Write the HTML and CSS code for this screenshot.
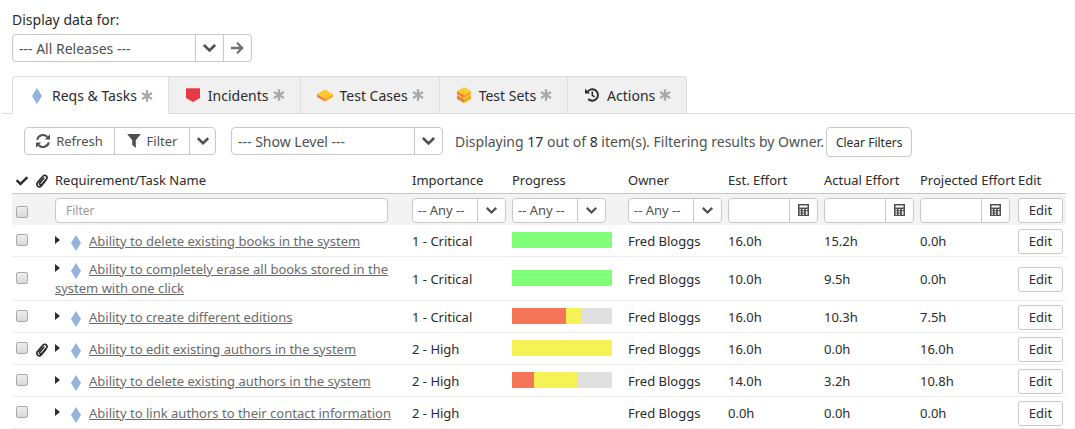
FILE: index.html
```html
<!DOCTYPE html>
<html lang="en">
<head>
<meta charset="utf-8">
<title>My Work</title>
<link rel="stylesheet" href="styles.css">
</head>
<body>
<svg class="sprite" aria-hidden="true">
  <symbol id="chevron" viewBox="0 0 12 8"><path d="M.8 1.200 6 6.200l5.200-5" fill="none" stroke="currentColor" stroke-width="2.500"/></symbol>
  <symbol id="arrow" viewBox="0 0 13 12"><path d="M0 6h11M6 .8 11.200 6 6 11.200" fill="none" stroke="currentColor" stroke-width="2.300"/></symbol>
  <symbol id="asterisk" viewBox="0 0 12 12"><path d="M6 .2v11.600M1 3.100l10 5.800M1 8.900l10-5.800" stroke="currentColor" stroke-width="2.300"/></symbol>
  <symbol id="diamond" viewBox="0 0 10 16"><path d="M5 0l5 8-5 8-5-8z" fill="#93b2dc"/></symbol>
  <symbol id="incident" viewBox="0 0 16 16"><path d="M1 1h14v10l-7 4-7-4z" fill="#e63946"/><path d="M1 1h14v1H1z" fill="#f16a76"/></symbol>
  <symbol id="testcase" viewBox="0 0 16 13"><path d="M0 5.500 8 10v3L0 8.500z" fill="#f0813a"/><path d="M16 5.500 8 10v3l8-4.500z" fill="#f7a727"/><path d="M8 1l8 4.500L8 10 0 5.500z" fill="#fdc92c"/></symbol>
  <symbol id="testset" viewBox="0 0 14 16"><path d="M0 8l7 4v4l-7-4z" fill="#f0813a"/><path d="M14 8l-7 4v4l7-4z" fill="#f7a727"/><path d="M0 8l7-3 7 3-7 4z" fill="#fdc92c"/><path d="M0 4l7 4v3L0 7z" fill="#f0813a"/><path d="M14 4 7 8v3l7-4z" fill="#f7a727"/><path d="M7 0l7 4-7 4-7-4z" fill="#fdc92c"/></symbol>
  <symbol id="history" viewBox="-1 -1 16 16"><path d="M2.300 4.200A5.700 5.700 0 1 1 3.200 11" fill="none" stroke="currentColor" stroke-width="1.900"/><path d="M0 .8 5 5.600H0z" fill="currentColor"/><path d="M7.300 3.600V7.400l2.400 1.500" fill="none" stroke="currentColor" stroke-width="1.500"/></symbol>
  <symbol id="refresh" viewBox="0 0 14 14"><path d="M1.200 5.800A5.900 5.900 0 0 1 11.400 3M12.800 8.200A5.900 5.900 0 0 1 2.600 11" fill="none" stroke="currentColor" stroke-width="2"/><path d="M14 .3v5.200H8.800zM0 13.700V8.500h5.200z" fill="currentColor"/></symbol>
  <symbol id="funnel" viewBox="0 0 14 14"><path d="M.2 0h13.600L8.800 6.200V14L5.200 11V6.200z" fill="currentColor"/></symbol>
  <symbol id="check" viewBox="0 0 512 512"><path d="M173.900 439.400 7.500 273c-10-10-10-26.200 0-36.200l36.200-36.200c10-10 26.200-10 36.200 0L192 312.700 432.100 72.600c10-10 26.200-10 36.200 0l36.200 36.200c10 10 10 26.200 0 36.200L210.100 439.400c-10 10-26.200 10-36.200 0z" fill="currentColor"/></symbol>
  <symbol id="clip" viewBox="0 0 12 14"><path d="M9.800 6.400 5.400 11.600C4.400 12.800 2.800 13 1.700 12.100S.6 9.700 1.500 8.600L6.800 2.300C7.700 1.200 9.200.9 10.200 1.800s1 2.300.2 3.300L6 10.300c-.6.700-1.400.8-2 .3s-.6-1.300 0-2L7.700 4.200" fill="none" stroke="currentColor" stroke-width="1.700" stroke-linecap="round"/></symbol>
  <symbol id="calc" viewBox="0 0 11 12"><path d="M0 0h11v12H0zM1.500 1.500v2h8v-2zM1.500 5v1.300H3V5zM4.600 5v1.300h1.600V5zM8 5v1.300h1.500V5zM1.500 7.300v1.300H3V7.300zM4.600 7.300v1.300h1.600V7.300zM8 7.300v3.500h1.500V7.300zM1.500 9.600v1.200H3V9.600zM4.600 9.600v1.200h1.600V9.600z" fill="currentColor" fill-rule="evenodd"/></symbol>
  <symbol id="caret" viewBox="0 0 5 8"><path d="M0 0l5 4-5 4z" fill="currentColor"/></symbol>
</svg>

<header class="release">
  <label for="release">Display data for:</label>
  <div class="group release-group">
    <span class="picker"><select id="release"><option>--- All Releases ---</option></select><svg class="chevron"><use href="#chevron"/></svg></span>
    <button class="go" type="button" aria-label="Go"><svg class="i-arrow"><use href="#arrow"/></svg></button>
  </div>
</header>

<nav class="tabs">
  <a class="tab active" href="#reqs"><svg class="i-tab"><use href="#diamond"/></svg><span>Reqs &amp; Tasks</span><svg class="star"><use href="#asterisk"/></svg></a>
  <a class="tab" href="#incidents"><svg class="i-tab"><use href="#incident"/></svg><span>Incidents</span><svg class="star"><use href="#asterisk"/></svg></a>
  <a class="tab" href="#cases"><svg class="i-tab"><use href="#testcase"/></svg><span>Test Cases</span><svg class="star"><use href="#asterisk"/></svg></a>
  <a class="tab" href="#sets"><svg class="i-tab"><use href="#testset"/></svg><span>Test Sets</span><svg class="star"><use href="#asterisk"/></svg></a>
  <a class="tab" href="#actions"><svg class="i-tab"><use href="#history"/></svg><span>Actions</span><svg class="star"><use href="#asterisk"/></svg></a>
</nav>

<main>
  <div class="toolbar">
    <div class="group">
      <button class="refresh" type="button"><svg class="i-14"><use href="#refresh"/></svg>Refresh</button>
      <button class="filter" type="button"><svg class="i-14"><use href="#funnel"/></svg>Filter</button>
      <button class="more" type="button" aria-label="Filter options"><svg class="i-chevron"><use href="#chevron"/></svg></button>
    </div>
    <div class="group level-group"><span class="picker"><select aria-label="Show level"><option>--- Show Level ---</option></select><svg class="chevron"><use href="#chevron"/></svg></span></div>
    <p class="status">Displaying <b>17</b> out of <b>8</b> item(s). Filtering results by Owner.</p>
    <button class="clear" type="button">Clear Filters</button>
  </div>

  <table class="grid">
    <colgroup><col class="c-check"><col class="c-clip"><col><col class="c-imp"><col class="c-prog"><col class="c-owner"><col class="c-num"><col class="c-num"><col class="c-proj"><col class="c-edit"></colgroup>
    <thead>
      <tr><th><svg class="i-check"><use href="#check"/></svg></th><th><svg class="i-clip"><use href="#clip"/></svg></th><th>Requirement/Task Name</th><th>Importance</th><th>Progress</th><th>Owner</th><th>Est. Effort</th><th>Actual Effort</th><th>Projected Effort</th><th>Edit</th></tr>
      <tr class="filters">
        <td><input type="checkbox" aria-label="Select all"></td><td></td>
        <td><input class="name-filter" type="text" placeholder="Filter" aria-label="Filter by name"></td>
        <td><span class="picker small"><select aria-label="Importance"><option>-- Any --</option></select><svg class="chevron"><use href="#chevron"/></svg></span></td>
        <td><span class="picker small"><select aria-label="Progress"><option>-- Any --</option></select><svg class="chevron"><use href="#chevron"/></svg></span></td>
        <td><span class="picker small"><select aria-label="Owner"><option>-- Any --</option></select><svg class="chevron"><use href="#chevron"/></svg></span></td>
        <td><span class="range"><input type="text" aria-label="Est. effort"><button type="button" aria-label="Pick est. effort"><svg class="i-calc"><use href="#calc"/></svg></button></span></td>
        <td><span class="range"><input type="text" aria-label="Actual effort"><button type="button" aria-label="Pick actual effort"><svg class="i-calc"><use href="#calc"/></svg></button></span></td>
        <td><span class="range"><input type="text" aria-label="Projected effort"><button type="button" aria-label="Pick projected effort"><svg class="i-calc"><use href="#calc"/></svg></button></span></td>
        <td><button class="edit" type="button">Edit</button></td>
      </tr>
    </thead>
    <tbody>
      <tr><td><input type="checkbox" aria-label="Select row"></td><td></td><td><svg class="i-caret"><use href="#caret"/></svg><svg class="i-req"><use href="#diamond"/></svg><a href="#r1">Ability to delete existing books in the system</a></td><td>1 - Critical</td><td><div class="bar"><i class="green" style="width:100%"></i></div></td><td>Fred Bloggs</td><td>16.0h</td><td>15.2h</td><td>0.0h</td><td><button class="edit" type="button">Edit</button></td></tr>
      <tr><td><input type="checkbox" aria-label="Select row"></td><td></td><td><svg class="i-caret"><use href="#caret"/></svg><svg class="i-req"><use href="#diamond"/></svg><a href="#r2">Ability to completely erase all books stored in the system with one click</a></td><td>1 - Critical</td><td><div class="bar"><i class="green" style="width:100%"></i></div></td><td>Fred Bloggs</td><td>10.0h</td><td>9.5h</td><td>0.0h</td><td><button class="edit" type="button">Edit</button></td></tr>
      <tr><td><input type="checkbox" aria-label="Select row"></td><td></td><td><svg class="i-caret"><use href="#caret"/></svg><svg class="i-req"><use href="#diamond"/></svg><a href="#r3">Ability to create different editions</a></td><td>1 - Critical</td><td><div class="bar"><i class="red" style="width:54%"></i><i class="yellow" style="width:16%"></i></div></td><td>Fred Bloggs</td><td>16.0h</td><td>10.3h</td><td>7.5h</td><td><button class="edit" type="button">Edit</button></td></tr>
      <tr><td><input type="checkbox" aria-label="Select row"></td><td><svg class="i-clip"><use href="#clip"/></svg></td><td><svg class="i-caret"><use href="#caret"/></svg><svg class="i-req"><use href="#diamond"/></svg><a href="#r4">Ability to edit existing authors in the system</a></td><td>2 - High</td><td><div class="bar"><i class="yellow" style="width:100%"></i></div></td><td>Fred Bloggs</td><td>16.0h</td><td>0.0h</td><td>16.0h</td><td><button class="edit" type="button">Edit</button></td></tr>
      <tr><td><input type="checkbox" aria-label="Select row"></td><td></td><td><svg class="i-caret"><use href="#caret"/></svg><svg class="i-req"><use href="#diamond"/></svg><a href="#r5">Ability to delete existing authors in the system</a></td><td>2 - High</td><td><div class="bar"><i class="red" style="width:22%"></i><i class="yellow" style="width:43%"></i></div></td><td>Fred Bloggs</td><td>14.0h</td><td>3.2h</td><td>10.8h</td><td><button class="edit" type="button">Edit</button></td></tr>
      <tr><td><input type="checkbox" aria-label="Select row"></td><td></td><td><svg class="i-caret"><use href="#caret"/></svg><svg class="i-req"><use href="#diamond"/></svg><a href="#r6">Ability to link authors to their contact information</a></td><td>2 - High</td><td></td><td>Fred Bloggs</td><td>0.0h</td><td>0.0h</td><td>0.0h</td><td><button class="edit" type="button">Edit</button></td></tr>
    </tbody>
  </table>
</main>
</body>
</html>
```

FILE: styles.css
```css
* { box-sizing: border-box; }
body {
  margin: 0;
  background: #fff;
  color: #2b2b2b;
  font: 13px/19px "Noto Sans", sans-serif;
}
.sprite { display: none; }
svg { flex: none; }
button, input, select {
  margin: 0;
  font: inherit;
  color: #505050;
  background: #fff;
  border: 1px solid #c8c8c8;
  border-radius: 4px;
}
button { padding: 0; display: flex; align-items: center; justify-content: center; }

.release { padding: 10px 12px 14px; font-size: 14px; }
.release label { display: block; margin-bottom: 5px; }
.group { display: flex; height: 28px; }
.group > * { border-radius: 0; }
.group > * + * { margin-left: -1px; }
.group > :first-child { border-radius: 4px 0 0 4px; }
.group > :last-child { border-radius: 0 4px 4px 0; }
.group > :only-child { border-radius: 4px; }

.picker {
  display: grid;
  grid-template-columns: 1fr 28px;
  width: 212px;
  height: 28px;
  background: #fff;
  border: 1px solid #c8c8c8;
  overflow: hidden;
}
.picker select {
  grid-area: 1 / 1 / 2 / 3;
  width: 100%;
  height: 100%;
  padding: 0 34px 0 6px;
  border: 0;
  background: transparent;
  appearance: none;
}
.picker .chevron {
  grid-area: 1 / 2;
  width: 28px;
  height: 100%;
  padding: 0 7px;
  border-left: 1px solid #c8c8c8;
  color: #505050;
  pointer-events: none;
}
.picker.small { width: 94px; height: 25px; border-radius: 4px; }
.picker.small select { padding: 0 28px 0 5px; }
.picker.small .chevron { padding: 0 8px; }
.go { width: 29px; }
.i-arrow { width: 13px; height: 12px; color: #707070; }

.tabs {
  display: flex;
  margin-left: 2px;
  padding-left: 10px;
  border-bottom: 1px solid #ddd;
  font-size: 14px;
}
.tab {
  display: flex;
  align-items: center;
  height: 37px;
  padding: 0 15px 0 16px;
  background: #f0f0f0;
  border: 1px solid #ddd;
  border-left-width: 0;
  border-bottom: 0;
  color: #2b2b2b;
  text-decoration: none;
}
.tab.active { height: 38px; margin-bottom: -1px; background: #fff; border-left-width: 1px; border-top-left-radius: 4px; }
.tab:last-child { border-top-right-radius: 4px; }
.i-tab { width: 16px; height: 16px; margin-right: 7px; }
.star { width: 12px; height: 12px; margin-left: 4px; color: #aaa; }

.toolbar { display: flex; align-items: flex-start; padding: 13px 24px 12px; }
.refresh { width: 91px; }
.filter { width: 76px; }
.more { width: 27px; }
.i-14 { width: 14px; height: 14px; margin-right: 6px; }
.i-chevron { width: 12px; height: 8px; }
.level-group { margin: 0 12px 0 15px; font-size: 14px; }
.status { margin: 5px 2px 0 0; color: #505050; font-size: 14px; }
.status b { font-weight: 400; color: #2b2b2b; }
.clear { height: 30px; padding: 0 9px; font-size: 12px; color: #2b2b2b; }

.grid { width: calc(100% - 21px); margin-left: 12px; table-layout: fixed; border-spacing: 0; }
.c-check { width: 20px; }
.c-clip { width: 19px; }
.c-imp, .c-owner { width: 100px; }
.c-prog { width: 116px; }
.c-num { width: 96px; }
.c-proj { width: 98px; }
.c-edit { width: 52px; }
.grid th { height: 25px; padding: 0 0 2px 4px; border-bottom: 1px solid #fdc92c; font-weight: 400; text-align: left; white-space: nowrap; }
.grid td { height: 32px; padding: 3px 4px 2px; border-bottom: 1px solid #eee; }
.grid .filters td { height: 31px; background: #f3f3f3; border-bottom: 0; }
.grid a { color: #6b6b6b; }
.grid svg { display: inline-block; }
.i-check { width: 12px; height: 12px; vertical-align: middle; }
.i-clip { width: 12px; height: 14px; vertical-align: middle; }
.i-caret { width: 5px; height: 8px; margin-right: 11px; vertical-align: 2px; }
.i-req { width: 10px; height: 16px; margin-right: 8px; vertical-align: -5px; }
.i-calc { width: 11px; height: 12px; }

input[type="checkbox"] {
  display: block;
  width: 12px;
  height: 12px;
  border: 1px solid #aaa;
  border-radius: 2px;
  background: linear-gradient(#eee, #d8d8d8);
  appearance: none;
}
tbody input[type="checkbox"], .bar { margin-bottom: 2px; }
.filters input[type="checkbox"] { margin-top: 4px; }
.name-filter { display: block; width: calc(100% - 16px); height: 25px; padding: 0 10px; font-size: 12px; }
.name-filter::placeholder { color: #999; }
.range { display: flex; width: 90px; height: 25px; }
.range input { flex: 1; min-width: 0; border-radius: 4px 0 0 4px; }
.range button { width: 29px; margin-left: -1px; border-radius: 0 4px 4px 0; }
.edit { width: 45px; height: 25px; color: #2b2b2b; border-radius: 3px; }
.bar { display: flex; width: 100px; height: 16px; background: #e0e0e0; }
.green { background: #80ff78; }
.yellow { background: #f5f255; }
.red { background: #f47658; }
```
